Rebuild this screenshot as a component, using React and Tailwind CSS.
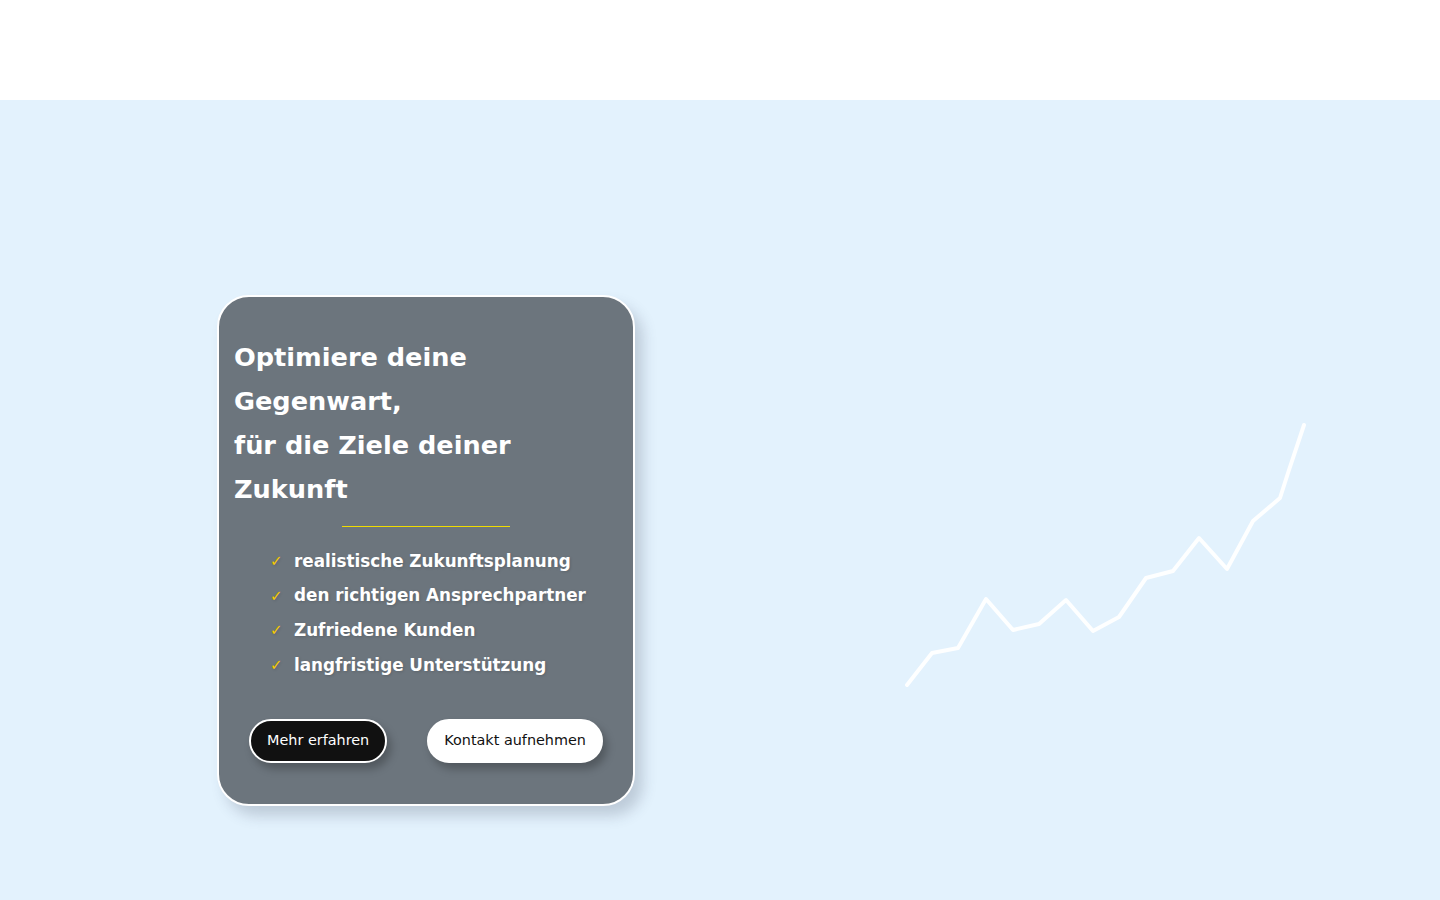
export default function App() {
  const items = [
    "realistische Zukunftsplanung",
    "den richtigen Ansprechpartner",
    "Zufriedene Kunden",
    "langfristige Unterstützung",
  ];
  const pts = [
    [7, 265], [32, 233], [58, 228], [86, 179], [113, 210], [139, 204], [166, 180],
    [193, 211], [219, 197], [246, 158], [273, 151], [299, 118], [327, 149],
    [353, 101], [380, 78], [388, 53], [404, 5],
  ];
  return (
    <div className="min-h-[900px] w-full bg-white" style={{ fontFamily: '"DejaVu Sans", sans-serif' }}>
      <div className="h-[100px] bg-white" />
      <main className="flex h-[800px] items-start bg-[#e3f2fd] pl-[217px] pt-[195px]">
        <div className="flex w-[418px] shrink-0 flex-col rounded-[32px] border-2 border-white bg-[#6c757d] pb-[41px] pl-[15px] pr-[15px] pt-[38px] shadow-[8px_10px_14px_rgba(60,70,90,0.22)]">
          <h1 className="text-[25.6px] font-bold leading-[44px] text-white">
            Optimiere deine
            <br />
            Gegenwart,
            <br />
            für die Ziele deiner
            <br />
            Zukunft
          </h1>
          <div className="mx-auto mt-[15px] h-px w-[168px] bg-[#f0dc00]" />
          <ul className="mt-[17px] flex flex-col pl-[36px]">
            {items.map((t) => (
              <li key={t} className="flex h-[34.67px] items-center text-[16.8px] font-bold text-white [text-shadow:1px_1px_3px_rgba(0,0,0,0.15)]">
                <span className="w-[24px] text-[15px] font-bold text-[#f5c800]">✓</span>
                {t}
              </li>
            ))}
          </ul>
          <div className="mt-[36px] flex items-center gap-[40px] pl-[15px]">
            <button className="h-[44px] rounded-full border-2 border-white bg-[#111111] px-4 text-[14.4px] text-white shadow-[4px_6px_8px_rgba(0,0,0,0.25)]">
              Mehr erfahren
            </button>
            <button className="h-[44px] rounded-full border-2 border-white bg-white px-[15px] text-[14.4px] text-[#111111] shadow-[4px_6px_8px_rgba(0,0,0,0.25)]">
              Kontakt aufnehmen
            </button>
          </div>
        </div>
        <svg className="ml-[265px] mt-[125px] shrink-0" width="410" height="270" viewBox="0 0 410 270">
          <polyline
            points={pts.map((p) => p.join(",")).join(" ")}
            fill="none"
            stroke="#ffffff"
            strokeWidth="4"
            strokeLinejoin="round"
            strokeLinecap="round"
            opacity="0.95"
          />
        </svg>
      </main>
    </div>
  );
}
